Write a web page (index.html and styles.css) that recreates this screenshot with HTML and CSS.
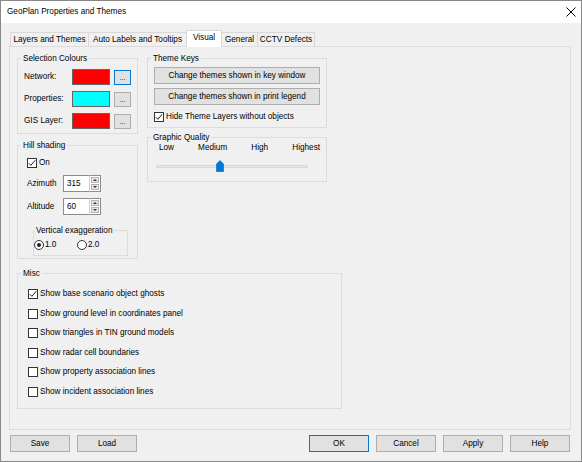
FILE: index.html
```html
<!DOCTYPE html>
<html>
<head>
    <title>GeoPlan Properties and Themes</title>
    <link rel="stylesheet" href="styles.css">
</head>
<body>
    <div class="window">
        <div class="titlebar">
            <span>GeoPlan Properties and Themes</span>
            <svg class="close" width="10" height="10" viewBox="0 0 10 10">
                <path d="M0.5 0.5 L9.5 9.5 M9.5 0.5 L0.5 9.5" stroke="#000" stroke-width="1" fill="none"/>
            </svg>
        </div>

        <div class="content">
            <div class="tabs">
                <div class="tab tab-layers">Layers and Themes</div>
                <div class="tab tab-labels">Auto Labels and Tooltips</div>
                <div class="tab tab-visual selected">Visual</div>
                <div class="tab tab-general">General</div>
                <div class="tab tab-cctv">CCTV Defects</div>
            </div>

            <div class="page">
                <div class="columns">
                    <!-- columna izquierda -->
                    <div class="col col-left">
                        <div class="group sel-colours">
                            <div class="group-title">Selection Colours</div>
                            <div class="color-row first">
                                <span class="color-label">Network:</span>
                                <span class="swatch red"></span>
                                <button class="dots focused">...</button>
                            </div>
                            <div class="color-row">
                                <span class="color-label">Properties:</span>
                                <span class="swatch cyan"></span>
                                <button class="dots">...</button>
                            </div>
                            <div class="color-row">
                                <span class="color-label">GIS Layer:</span>
                                <span class="swatch red"></span>
                                <button class="dots">...</button>
                            </div>
                        </div>

                        <div class="group hill">
                            <div class="group-title">Hill shading</div>
                            <label class="checkitem hill-on">
                                <span class="check">
                                    <svg width="8" height="8" viewBox="0 0 8 8"><path d="M0.8 4.2 L2.9 6.3 L7.2 1.2" stroke="#000" stroke-width="0.9" fill="none"/></svg>
                                </span>
                                On
                            </label>
                            <div class="spin-row azimuth">
                                <span class="spin-label">Azimuth</span>
                                <span class="spin-field">315</span>
                                <span class="spin-buttons">
                                    <span class="spin-btn"><span class="arrow-up"></span></span>
                                    <span class="spin-btn"><span class="arrow-down"></span></span>
                                </span>
                            </div>
                            <div class="spin-row altitude">
                                <span class="spin-label">Altitude</span>
                                <span class="spin-field">60</span>
                                <span class="spin-buttons">
                                    <span class="spin-btn"><span class="arrow-up"></span></span>
                                    <span class="spin-btn"><span class="arrow-down"></span></span>
                                </span>
                            </div>
                            <div class="group vert">
                                <div class="group-title">Vertical exaggeration</div>
                                <div class="radios">
                                    <label class="radioitem"><span class="radio on"><span class="dot"></span></span>1.0</label>
                                    <label class="radioitem"><span class="radio"></span>2.0</label>
                                </div>
                            </div>
                        </div>
                    </div>

                    <!-- columna derecha -->
                    <div class="col col-right">
                        <div class="group theme-keys">
                            <div class="group-title">Theme Keys</div>
                            <button class="wide-btn first">Change themes shown in key window</button>
                            <button class="wide-btn">Change themes shown in print legend</button>
                            <label class="checkitem hide-layers">
                                <span class="check">
                                    <svg width="8" height="8" viewBox="0 0 8 8"><path d="M0.8 4.2 L2.9 6.3 L7.2 1.2" stroke="#000" stroke-width="0.9" fill="none"/></svg>
                                </span>
                                Hide Theme Layers without objects
                            </label>
                        </div>

                        <div class="group quality">
                            <div class="group-title">Graphic Quality</div>
                            <div class="ticks">
                                <span>Low</span>
                                <span>Medium</span>
                                <span>High</span>
                                <span>Highest</span>
                            </div>
                            <div class="slider">
                                <div class="track"></div>
                                <svg class="thumb" width="8" height="12" viewBox="0 0 8 12">
                                    <path d="M0.5 4 L4 0.5 L7.5 4 L7.5 11.5 L0.5 11.5 Z" fill="#0078d7" stroke="#005fb0" stroke-width="0.6"/>
                                </svg>
                            </div>
                        </div>
                    </div>
                </div>

                <div class="group misc">
                    <div class="group-title">Misc</div>
                    <div class="misc-list">
                        <label class="checkitem">
                            <span class="check">
                                <svg width="8" height="8" viewBox="0 0 8 8"><path d="M0.8 4.2 L2.9 6.3 L7.2 1.2" stroke="#000" stroke-width="0.9" fill="none"/></svg>
                            </span>
                            Show base scenario object ghosts
                        </label>
                        <label class="checkitem"><span class="check"></span>Show ground level in coordinates panel</label>
                        <label class="checkitem"><span class="check"></span>Show triangles in TIN ground models</label>
                        <label class="checkitem"><span class="check"></span>Show radar cell boundaries</label>
                        <label class="checkitem"><span class="check"></span>Show property association lines</label>
                        <label class="checkitem"><span class="check"></span>Show incident association lines</label>
                    </div>
                </div>
            </div>

            <div class="footer">
                <button class="btn">Save</button>
                <button class="btn">Load</button>
                <div class="spacer"></div>
                <button class="btn default">OK</button>
                <button class="btn">Cancel</button>
                <button class="btn">Apply</button>
                <button class="btn">Help</button>
            </div>
        </div>
    </div>
</body>
</html>
```

FILE: styles.css
```css
html, body {
    margin: 0;
    padding: 0;
}

body {
    font-family: "Liberation Sans", Arial, sans-serif;
    font-size: 8.2px;
    line-height: 10px;
    color: #000;
}

.window {
    width: 582px;
    height: 462px;
    box-sizing: border-box;
    border: 1px solid #888;
    background: #f0f0f0;
    display: flex;
    flex-direction: column;
}

.titlebar {
    height: 22px;
    flex-shrink: 0;
    background: #fff;
    display: flex;
    align-items: center;
    justify-content: space-between;
    padding: 0 5px 0 6px;
}

.content {
    flex: 1;
    display: flex;
    flex-direction: column;
    padding: 7px 10px 0 8px;
}

/* pestañas */
.tabs {
    display: flex;
    align-items: flex-end;
    height: 16px;
    padding-left: 1px;
}

.tab {
    height: 14px;
    box-sizing: border-box;
    border: 1px solid #d9d9d9;
    border-bottom: none;
    border-right: none;
    display: flex;
    align-items: center;
    justify-content: center;
    white-space: nowrap;
}

.tab-cctv {
    border-right: 1px solid #d9d9d9;
}

.tab-layers { width: 78px; }
.tab-labels { width: 98px; }
.tab-visual { width: 36px; }
.tab-general { width: 35px; }
.tab-cctv { width: 58px; }

.tab.selected {
    height: 17px;
    margin-bottom: -1px;
    background: #fff;
    border-right: 1px solid #d9d9d9;
    position: relative;
    z-index: 1;
    padding-bottom: 3px;
}

.tab.selected + .tab {
    border-left: none;
}

.page {
    height: 384px;
    box-sizing: border-box;
    border: 1px solid #dcdcdc;
    padding: 11px 0 0 7px;
}

.columns {
    display: grid;
    grid-template-columns: 121px 180px;
    column-gap: 9px;
    align-items: start;
}

.col {
    display: flex;
    flex-direction: column;
}

.col-left {
    gap: 11px;
}

.col-right {
    gap: 9px;
}

/* cajas de grupo */
.group {
    --pad: 0px;
    --title: 3px;
    box-sizing: border-box;
    border: 1px solid #dcdcdc;
    padding-left: var(--pad);
    display: flex;
    flex-direction: column;
    align-items: flex-start;
}

.group-title {
    margin: -6px 0 0 calc(var(--title) - var(--pad));
    padding: 0 2px;
    line-height: 11px;
    background: #f0f0f0;
    white-space: nowrap;
}

.sel-colours {
    --pad: 6px;
    height: 76px;
}

.color-row {
    display: flex;
    align-items: center;
    height: 16px;
    margin-top: 6px;
}

.color-row.first {
    margin-top: 5px;
}

.color-label {
    width: 48px;
}

.swatch {
    width: 38px;
    height: 16px;
    box-sizing: border-box;
    border: 1px solid #646464;
}

.swatch.red {
    background: #ff0000;
}

.swatch.cyan {
    background: #00ffff;
}

.dots {
    width: 17px;
    height: 15px;
    margin-left: 4px;
    padding: 0 0 3px 0;
    box-sizing: border-box;
    border: 1px solid #adadad;
    background: #e1e1e1;
    font: inherit;
    font-size: 7px;
    line-height: 7px;
    display: flex;
    align-items: flex-end;
    justify-content: center;
}

.dots.focused {
    border-color: #0078d7;
}

/* casillas */
.checkitem {
    display: flex;
    align-items: center;
    gap: 2px;
    height: 10px;
    white-space: nowrap;
}

.check {
    width: 10px;
    height: 10px;
    box-sizing: border-box;
    border: 1px solid #333;
    background: #fff;
    display: flex;
    align-items: center;
    justify-content: center;
}

.check svg {
    display: block;
}

.radioitem {
    display: flex;
    align-items: center;
    gap: 1px;
    height: 10px;
    width: 43px;
}

.radio {
    width: 10px;
    height: 10px;
    box-sizing: border-box;
    border: 1px solid #333;
    border-radius: 50%;
    background: #fff;
    display: flex;
    align-items: center;
    justify-content: center;
}

.radio .dot {
    width: 4px;
    height: 4px;
    border-radius: 50%;
    background: #222;
}

/* sombreado */
.hill {
    --pad: 9px;
    height: 114px;
}

.hill-on {
    margin-top: 7px;
}

.spin-row {
    display: flex;
    align-items: center;
    height: 17px;
}

.spin-row.azimuth {
    margin-top: 7px;
}

.spin-row.altitude {
    margin-top: 6px;
}

.spin-label {
    width: 36px;
}

.spin-field {
    width: 26px;
    height: 17px;
    box-sizing: border-box;
    border: 1px solid #8c8c8c;
    border-right: none;
    background: #fff;
    padding-left: 3px;
    line-height: 15px;
}

.spin-buttons {
    width: 12px;
    height: 17px;
    box-sizing: border-box;
    border: 1px solid #8c8c8c;
    border-left: 1px solid #d0d0d0;
    background: #fff;
    padding: 1px;
    display: flex;
    flex-direction: column;
    gap: 1px;
}

.spin-btn {
    flex: 1;
    box-sizing: border-box;
    border: 1px solid #b4b4b4;
    background: #e6e6e6;
    display: flex;
    align-items: center;
    justify-content: center;
}

.arrow-up {
    width: 0;
    height: 0;
    border-left: 2px solid transparent;
    border-right: 2px solid transparent;
    border-bottom: 2px solid #333;
}

.arrow-down {
    width: 0;
    height: 0;
    border-left: 2px solid transparent;
    border-right: 2px solid transparent;
    border-top: 2px solid #333;
}

.vert {
    --title: 0px;
    width: 95px;
    height: 26px;
    margin: 15px 0 0 6px;
}

.radios {
    display: flex;
    margin-top: 4px;
}

/* leyendas */
.theme-keys {
    --pad: 6px;
    height: 70px;
}

.wide-btn {
    width: 166px;
    height: 17px;
    margin-top: 4px;
    padding: 0;
    box-sizing: border-box;
    border: 1px solid #adadad;
    background: #e1e1e1;
    font: inherit;
}

.wide-btn.first {
    margin-top: 3px;
}

.hide-layers {
    margin-top: 7px;
}

.quality {
    height: 45px;
    align-items: stretch;
}

.quality .group-title {
    align-self: flex-start;
}

.ticks {
    display: flex;
    justify-content: space-between;
    padding: 0 6px 0 11px;
}

.slider {
    position: relative;
    width: 152px;
    height: 12px;
    margin: 7px 0 0 8px;
}

.track {
    position: absolute;
    left: 0;
    right: 0;
    top: 5px;
    height: 3px;
    box-sizing: border-box;
    border: 1px solid #dadada;
    background: #e7e7e7;
}

.thumb {
    position: absolute;
    left: 60px;
    top: 0;
    display: block;
}

/* otros */
.misc {
    --pad: 10px;
    width: 325px;
    height: 136px;
    margin-top: 14px;
}

.misc-list {
    display: flex;
    flex-direction: column;
    gap: 9.5px;
    margin-top: 10px;
}

/* botones */
.footer {
    display: flex;
    gap: 7px;
    margin-top: 5px;
    padding: 0 1px;
}

.spacer {
    flex: 1;
}

.btn {
    width: 60px;
    height: 17px;
    padding: 0;
    box-sizing: border-box;
    border: 1px solid #adadad;
    background: #e1e1e1;
    font: inherit;
}

.btn.default {
    border-color: #0078d7;
}
```
